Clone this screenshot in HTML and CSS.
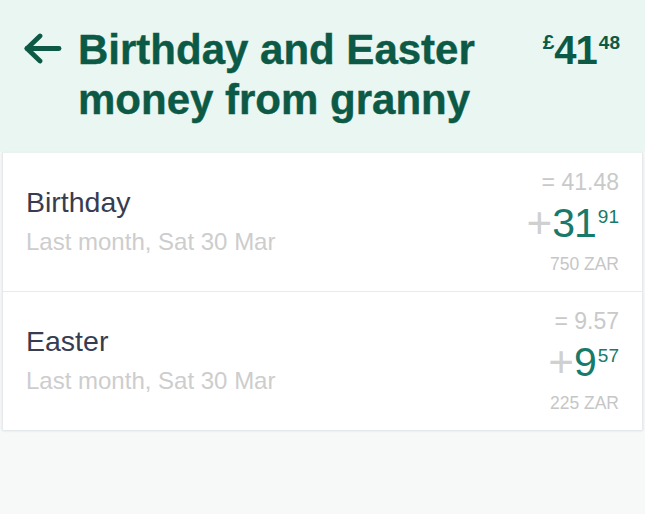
FILE: index.html
```html
<!DOCTYPE html>
<html lang="en">
<head>
<meta charset="utf-8">
<title>Birthday and Easter money from granny</title>
<link rel="stylesheet" href="styles.css">
</head>
<body>
<header class="header">
  <a class="back" href="#" aria-label="Back">
    <svg width="38" height="31" viewBox="0 0 38 31" fill="none" stroke="currentColor" stroke-width="4.8" stroke-linecap="round" stroke-linejoin="round">
      <path d="M3 15.5 H35"/>
      <path d="M16 3 L3 15.5 L16 28"/>
    </svg>
  </a>
  <h1 class="title">Birthday and Easter money from granny</h1>
  <div class="total">
    <span class="total-cur">£</span><span class="total-main">41</span><span class="total-cents">48</span>
  </div>
</header>

<main class="card">
  <div class="row">
    <div class="info">
      <div class="name">Birthday</div>
      <div class="date">Last month, Sat 30 Mar</div>
    </div>
    <div class="money">
      <div class="equiv">= 41.48</div>
      <div class="amt"><span class="plus">+</span><span class="main">31</span><span class="cents">91</span></div>
      <div class="orig">750 ZAR</div>
    </div>
  </div>
  <div class="row">
    <div class="info">
      <div class="name">Easter</div>
      <div class="date">Last month, Sat 30 Mar</div>
    </div>
    <div class="money">
      <div class="equiv">= 9.57</div>
      <div class="amt"><span class="plus">+</span><span class="main">9</span><span class="cents">57</span></div>
      <div class="orig">225 ZAR</div>
    </div>
  </div>
</main>
</body>
</html>
```

FILE: styles.css
```css
* { box-sizing: border-box; }

html, body {
  margin: 0;
  padding: 0;
}

body {
  background: #f7f9f9;
  font-family: "Liberation Sans", Arial, Helvetica, sans-serif;
  width: 645px;
  min-height: 514px;
}

.header {
  background: #e9f6f2;
  display: flex;
  align-items: flex-start;
  padding: 25px 25px 27px 24px;
  color: #0c5a46;
}

.back {
  color: #0c5a46;
  display: block;
  margin-top: 8px;
  width: 38px;
  height: 31px;
  flex: none;
}

.back svg { display: block; }

.title {
  margin: 0 0 0 16px;
  font-size: 42px;
  line-height: 50px;
  font-weight: 700;
  flex: 1;
  -webkit-text-stroke: 0.4px #0c5a46;
}

.total {
  display: flex;
  align-items: flex-start;
  margin-top: 5px;
  font-weight: 700;
  line-height: 1;
  flex: none;
}

.total-cur {
  font-size: 21px;
  margin-top: 1px;
  margin-right: 0;
}

.total-main {
  font-size: 40px;
  letter-spacing: -1px;
}

.total-cents {
  font-size: 19px;
  margin-top: 3px;
  margin-left: 2px;
}

.card {
  margin: 0 2px;
  background: #ffffff;
  border-left: 1px solid #e7e9ed;
  border-right: 1px solid #e7e9ed;
  border-top: 1px solid #edf0f0;
  box-shadow: 0 1px 2px rgba(40, 50, 80, 0.12);
}

.row {
  display: flex;
  align-items: center;
  justify-content: space-between;
  height: 139px;
  padding: 0 23px 0 23px;
  border-bottom: 1px solid #e8eaee;
}

.row:last-child { border-bottom: none; height: 138px; }

.info {
  display: flex;
  flex-direction: column;
}

.name {
  font-size: 28.5px;
  line-height: 34px;
  color: #373c50;
}

.date {
  font-size: 24px;
  line-height: 34px;
  margin-top: 6px;
  color: #cdcdcd;
}

.money {
  display: flex;
  flex-direction: column;
  align-items: flex-end;
  margin-top: -1px;
}

.equiv {
  font-size: 23px;
  line-height: 26px;
  color: #c9c9c9;
}

.amt {
  display: flex;
  align-items: flex-start;
  line-height: 1;
  margin-top: 8px;
  margin-bottom: 10px;
}

.plus {
  font-size: 44px;
  line-height: 40px;
  color: #d0d0d0;
  margin-right: 0;
}

.main {
  font-size: 41px;
  color: #177a6a;
  letter-spacing: -1px;
}

.cents {
  font-size: 19px;
  color: #177a6a;
  margin-top: 4px;
  margin-left: 2px;
}

.orig {
  font-size: 17.5px;
  line-height: 20px;
  color: #c6c6c6;
}
```
